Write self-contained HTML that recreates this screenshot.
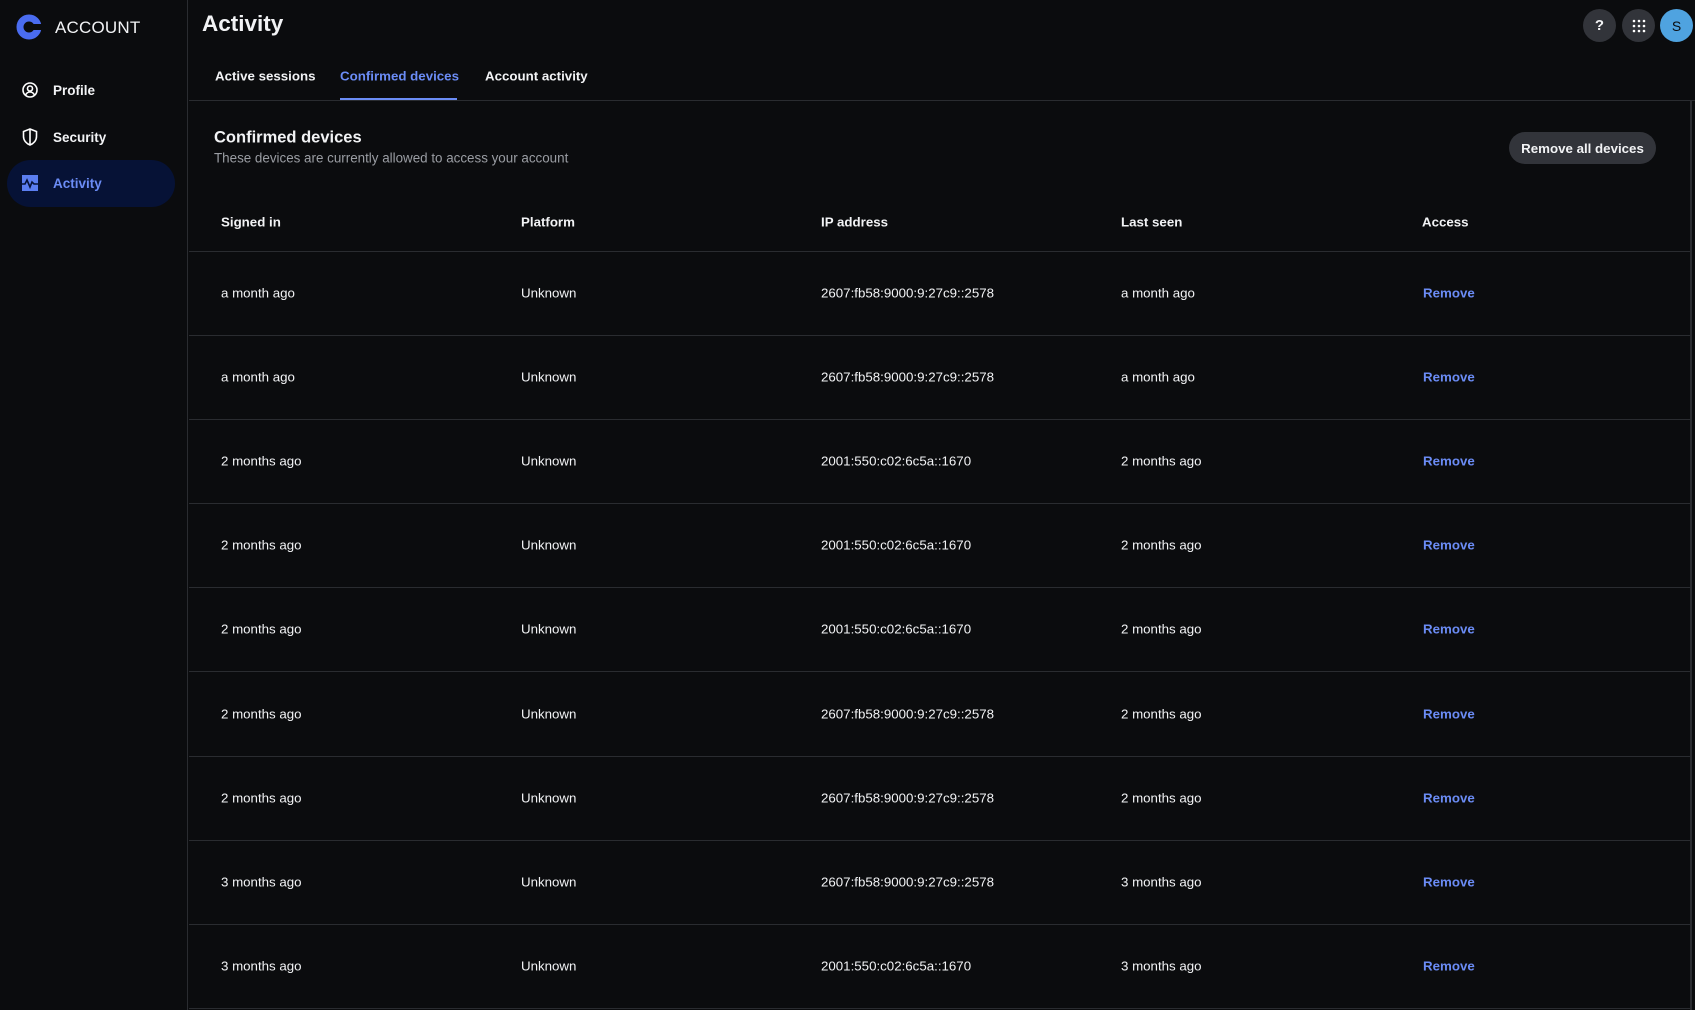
<!DOCTYPE html>
<html><head><meta charset="utf-8"><style>
*{box-sizing:border-box;margin:0;padding:0}
body{width:1695px;height:1010px;background:#0b0c0e;color:#f2f3f5;font-family:"Liberation Sans",sans-serif;overflow:hidden;position:relative}
.abs{position:absolute}
.side{left:0;top:0;width:188px;height:1010px;border-right:1px solid #2a2c30}
.nav{position:absolute;left:22px;font-size:13.5px;font-weight:bold;display:flex;align-items:center;height:20px}
.nav svg{margin-right:15px}
.t{position:absolute;font-size:13.3px;transform:translateY(-50%);white-space:nowrap}
.hr{position:absolute;left:189px;right:4px;height:1px;background:#2a2c30}
.rm{color:#6b8cf5;font-weight:bold}
.circ{position:absolute;width:33px;height:33px;border-radius:50%;background:#32343a;top:9px;display:flex;align-items:center;justify-content:center;font-size:15px;font-weight:bold}
</style></head><body>
<div class="abs side"></div>
<svg class="abs" style="left:16px;top:14px" width="26" height="26" viewBox="0 0 26 26"><circle cx="13" cy="13" r="9" fill="none" stroke="#4a6cf0" stroke-width="7"/><rect x="17" y="10" width="10" height="6" fill="#0b0c0e"/></svg>
<div class="abs" style="left:55px;top:18px;font-size:17px;letter-spacing:0.2px">ACCOUNT</div>
<div class="abs" style="left:7px;top:160px;width:168px;height:47px;border-radius:24px;background:#061236"></div>
<div class="nav" style="top:80px"><svg width="16" height="16" viewBox="0 0 16 16" fill="none" stroke="#fff" stroke-width="1.6"><circle cx="8" cy="8" r="7"/><circle cx="8" cy="6.5" r="2.5"/><path d="M3.5 13c1-2 2.5-3 4.5-3s3.5 1 4.5 3"/></svg>Profile</div>
<div class="nav" style="top:127px"><svg width="16" height="18" viewBox="0 0 16 18" fill="none" stroke="#fff" stroke-width="1.6"><path d="M8 1L1.5 3.5v5c0 4 3 7 6.5 8.5 3.5-1.5 6.5-4.5 6.5-8.5v-5z"/><path d="M8 1v16"/></svg>Security</div>
<div class="nav" style="top:173px;color:#6b8cf5"><svg width="16" height="16" viewBox="0 0 16 16"><rect width="16" height="16" fill="#5b7ef0"/><path d="M0 9h3l2-4 3 7 2-5 2 2h4" fill="none" stroke="#061236" stroke-width="1.6"/></svg>Activity</div>

<div class="abs" style="left:202px;top:11px;font-size:22.5px;font-weight:bold">Activity</div>
<div class="circ" style="left:1583px">?</div>
<div class="circ" style="left:1622px"><svg width="14" height="14" viewBox="0 0 14 14" fill="#fff"><circle cx="2" cy="2" r="1.3"/><circle cx="7" cy="2" r="1.3"/><circle cx="12" cy="2" r="1.3"/><circle cx="2" cy="7" r="1.3"/><circle cx="7" cy="7" r="1.3"/><circle cx="12" cy="7" r="1.3"/><circle cx="2" cy="12" r="1.3"/><circle cx="7" cy="12" r="1.3"/><circle cx="12" cy="12" r="1.3"/></svg></div>
<div class="circ" style="left:1660px;background:#4fa3e0;color:#0b0c0e;font-weight:normal;font-size:14px">S</div>

<div class="t" style="left:215px;top:76px;font-weight:bold;font-size:13.3px">Active sessions</div>
<div class="t" style="left:340px;top:76px;font-weight:bold;color:#6b8cf5;font-size:13.3px">Confirmed devices</div>
<div class="t" style="left:485px;top:76px;font-weight:bold;font-size:13.3px">Account activity</div>
<div class="abs" style="left:340px;top:98px;width:117px;height:2px;background:#6b8cf5"></div>
<div class="hr" style="top:100px;right:0"></div>
<div class="abs" style="left:1690px;top:101px;width:2px;height:909px;background:#2a2c30"></div>

<div class="t" style="left:214px;top:138px;font-size:16.5px;font-weight:bold">Confirmed devices</div>
<div class="t" style="left:214px;top:158px;font-size:13.4px;color:#9a9da3">These devices are currently allowed to access your account</div>
<div class="abs" style="left:1509px;top:132px;width:147px;height:32px;border-radius:16px;background:#32343a;font-size:13.3px;font-weight:bold;display:flex;align-items:center;justify-content:center">Remove all devices</div>

<div class="t" style="left:221px;top:222px;font-weight:bold">Signed in</div>
<div class="t" style="left:521px;top:222px;font-weight:bold">Platform</div>
<div class="t" style="left:821px;top:222px;font-weight:bold">IP address</div>
<div class="t" style="left:1121px;top:222px;font-weight:bold">Last seen</div>
<div class="t" style="left:1422px;top:222px;font-weight:bold">Access</div>
<div class="hr" style="top:251px"></div>

<div id="rows"></div>
<script>
var d=[["a month ago","2607:fb58:9000:9:27c9::2578","a month ago"],["a month ago","2607:fb58:9000:9:27c9::2578","a month ago"],["2 months ago","2001:550:c02:6c5a::1670","2 months ago"],["2 months ago","2001:550:c02:6c5a::1670","2 months ago"],["2 months ago","2001:550:c02:6c5a::1670","2 months ago"],["2 months ago","2607:fb58:9000:9:27c9::2578","2 months ago"],["2 months ago","2607:fb58:9000:9:27c9::2578","2 months ago"],["3 months ago","2607:fb58:9000:9:27c9::2578","3 months ago"],["3 months ago","2001:550:c02:6c5a::1670","3 months ago"]];
var h="";d.forEach(function(r,i){var y=293+i*84.1;
h+='<div class="t" style="left:221px;top:'+y+'px">'+r[0]+'</div><div class="t" style="left:521px;top:'+y+'px">Unknown</div><div class="t" style="left:821px;top:'+y+'px">'+r[1]+'</div><div class="t" style="left:1121px;top:'+y+'px">'+r[2]+'</div><div class="t rm" style="left:1423px;top:'+y+'px">Remove</div><div class="hr" style="top:'+(335+i*84.1)+'px"></div>';});
document.getElementById("rows").innerHTML=h;
</script>
</body></html>
